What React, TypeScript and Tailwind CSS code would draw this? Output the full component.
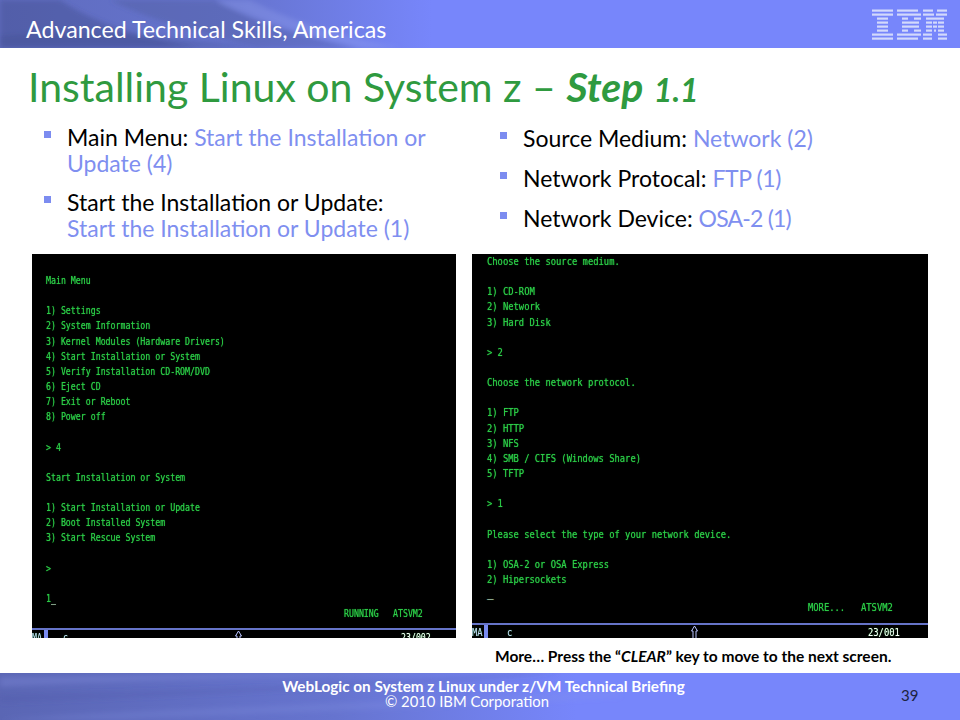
const leftLines = `Main Menu

1) Settings
2) System Information
3) Kernel Modules (Hardware Drivers)
4) Start Installation or System
5) Verify Installation CD-ROM/DVD
6) Eject CD
7) Exit or Reboot
8) Power off

> 4

Start Installation or System

1) Start Installation or Update
2) Boot Installed System
3) Start Rescue System

>

1`;

const rightLines = `Choose the source medium.

1) CD-ROM
2) Network
3) Hard Disk

> 2

Choose the network protocol.

1) FTP
2) HTTP
3) NFS
4) SMB / CIFS (Windows Share)
5) TFTP

> 1

Please select the type of your network device.

1) OSA-2 or OSA Express
2) Hipersockets`;

// each stripe: [x, width] pieces of the logo, drawn on a 75x31 box
const logoStripes: [number, number][][] = [
  [[0, 21], [25, 21], [51, 10], [65, 10]],
  [[0, 21], [25, 24], [51, 11], [64, 11]],
  [[5, 11], [30, 6], [42, 7], [54, 18]],
  [[5, 11], [30, 17], [54, 6], [61, 4], [66, 6]],
  [[5, 11], [30, 17], [54, 6], [61, 4], [66, 6]],
  [[5, 11], [30, 6], [42, 7], [54, 6], [62, 2], [66, 6]],
  [[0, 21], [25, 24], [51, 9], [66, 9]],
  [[0, 21], [25, 21], [51, 9], [66, 9]],
];

function IbmLogo() {
  return (
    <svg width="75" height="31" viewBox="0 0 75 31" className="absolute right-[13px] top-[9px]" fill="#d3d9fb">
      {logoStripes.map((pieces, i) =>
        pieces.map(([x, w]) => <rect key={`${i}-${x}`} x={x} y={i * 4 + 0.5} width={w} height="2.2" />)
      )}
    </svg>
  );
}

function Swoosh({ height, id, flip }: { height: number; id: string; flip?: boolean }) {
  return (
    <svg className="absolute inset-0" width="960" height={height} viewBox={`0 0 960 ${height}`}>
      <defs>
        <filter id={id}>
          <feGaussianBlur stdDeviation="2.5" />
        </filter>
      </defs>
      {flip ? (
        <g filter={`url(#${id})`}>
          <path d="M0 14 C150 6 300 4 480 0 L300 0 L0 4 Z" fill="#8791e0" opacity="0.3" />
          <path d="M0 30 C200 22 380 14 560 0 L520 0 C340 14 160 18 0 22 Z" fill="#4a57a8" opacity="0.25" />
          <path d="M0 47 C120 36 340 32 620 18 L620 24 C380 38 200 42 120 47 Z" fill="#8a95e8" opacity="0.2" />
        </g>
      ) : (
        <g filter={`url(#${id})`}>
          <path d="M0 0 L60 0 C90 20 130 36 200 48 L0 48 Z" fill="#3f4b8a" opacity="0.4" />
          <path d="M110 0 L215 0 C250 20 300 36 360 48 L260 48 C200 34 150 20 110 0 Z" fill="#46528f" opacity="0.3" />
          <path d="M215 0 L250 0 C285 18 330 34 400 48 L360 48 C300 34 250 18 215 0 Z" fill="#98a4f0" opacity="0.3" />
          <path d="M0 36 C60 30 150 32 260 48 L0 48 Z" fill="#3f4b8a" opacity="0.3" />
        </g>
      )}
    </svg>
  );
}

function Bullet({ children, className }: { children: React.ReactNode; className?: string }) {
  return (
    <li className={`flex ${className ?? ""}`}>
      <span className="mt-[7px] h-[7px] w-[7px] shrink-0 bg-[#7c8cf0]" />
      <div className="ml-4">{children}</div>
    </li>
  );
}

function Blue({ children, className }: { children: React.ReactNode; className?: string }) {
  return <span className={`text-[#7f8ff0] ${className ?? ""}`}>{children}</span>;
}

function ShiftArrow() {
  return (
    <svg width="7" height="15" viewBox="0 0 7 15" fill="none" stroke="#b9c3ff" strokeWidth="1">
      <path d="M2 15 V6 H0.5 L3.5 1 L6.5 6 H5 V15" />
    </svg>
  );
}

export default function App() {
  return (
    <div className="flex h-[720px] w-[960px] flex-col overflow-hidden bg-white font-['Lato','Open_Sans',sans-serif] text-black">
      <header className="relative h-12 shrink-0 bg-[linear-gradient(90deg,#5f6cbe_0%,#6674cf_25%,#7786fb_45%,#7786fb_100%)]">
        <Swoosh height={48} id="head-blur" />
        <div className="relative pl-[26px] pt-[12px] text-[23.2px] leading-[34px] text-white">Advanced Technical Skills, Americas</div>
        <IbmLogo />
      </header>

      <h1 className="ml-[28px] mt-[14px] h-[50px] text-[41px] leading-[50px] font-normal whitespace-nowrap text-[#2f9a3f]">
        Installing Linux on System z – <span className="font-bold italic">Step</span>{" "}
        <span className="text-[32px] font-bold italic">1.1</span>
      </h1>

      <div className="flex h-[142px] shrink-0 text-[23px] leading-[26px]">
        <ul className="ml-[44px] mt-[12px] w-[411px]">
          <Bullet>
            Main Menu: <Blue>Start the Installation or Update (4)</Blue>
          </Bullet>
          <Bullet className="mt-[13px]">
            Start the Installation or Update:
            <br />
            <Blue>Start the Installation or Update (1)</Blue>
          </Bullet>
        </ul>
        <ul className="ml-[45px] mt-[13px] flex flex-col gap-[14px]">
          <Bullet>
            Source Medium: <Blue>Network (2)</Blue>
          </Bullet>
          <Bullet>
            Network Protocal: <Blue className="tracking-[-0.4px]">FTP (1)</Blue>
          </Bullet>
          <Bullet>
            Network Device: <Blue className="tracking-[-0.8px]">OSA-2 (1)</Blue>
          </Bullet>
        </ul>
      </div>

      <div className="flex h-[384px] shrink-0 gap-4 px-8 font-['DejaVu_Sans_Mono',monospace] text-[11px] leading-[15.14px] text-[#2ccb47] [text-shadow:0_0_1px_#22b83c]">
        <section className="flex w-[424px] flex-col overflow-hidden bg-black">
          <pre className="ml-[14px] origin-left scale-x-[0.75] pt-[19px] font-['DejaVu_Sans_Mono',monospace]">
            {leftLines}
            <span className="text-white">_</span>
          </pre>
          <div className="ml-[312px] flex h-[15px]">
            <span className="block w-[49px] origin-left scale-x-[0.75]">RUNNING</span>
            <span className="block origin-left scale-x-[0.75]">ATSVM2</span>
          </div>
          <div className="mt-[7px] flex h-[30px] items-start border-t-2 border-[#6674c8] text-[#c9d0ff]">
            <span className="flex w-[16px]">
              <span className="block w-[12px] origin-left scale-x-[0.75]">MA</span>
              <span className="h-[15px] w-[4px] bg-[#7a8cf0]" />
            </span>
            <span className="ml-[15px] block w-[172px] origin-left scale-x-[0.75]">c</span>
            <span className="block w-[166px]">
              <ShiftArrow />
            </span>
            <span className="block origin-left scale-x-[0.75] text-white">23/002</span>
          </div>
        </section>
        <section className="flex w-[456px] flex-col overflow-hidden bg-black">
          <pre className="ml-[15px] origin-left scale-x-[0.802] font-['DejaVu_Sans_Mono',monospace]">{rightLines}</pre>
          <div className="ml-[15px] h-[13px] leading-[13px] text-white">_</div>
          <div className="ml-[336px] flex h-[15px]">
            <span className="block w-[53px] origin-left scale-x-[0.802]">MORE...</span>
            <span className="block origin-left scale-x-[0.802]">ATSVM2</span>
          </div>
          <div className="mt-[8px] flex h-[15px] items-start border-t-2 border-[#6674c8] text-[#c9d0ff]">
            <span className="flex w-[16px]">
              <span className="block w-[12px] origin-left scale-x-[0.802]">MA</span>
              <span className="h-[15px] w-[4px] bg-[#7a8cf0]" />
            </span>
            <span className="ml-[19px] block w-[184px] origin-left scale-x-[0.802]">c</span>
            <span className="block w-[177px]">
              <ShiftArrow />
            </span>
            <span className="block origin-left scale-x-[0.802] text-white">23/001</span>
          </div>
        </section>
      </div>

      <p className="ml-[495px] mt-[9px] h-[26px] text-[15.5px] leading-[18px] font-bold whitespace-nowrap">
        More… Press the “<span className="italic">CLEAR</span>” key to move to the next screen.
      </p>

      <footer className="relative flex h-[47px] shrink-0 bg-[linear-gradient(90deg,#5a66b4_0%,#6674cf_35%,#7786fb_60%,#7786fb_100%)]">
        <Swoosh height={47} id="foot-blur" flip />
        <div className="relative ml-[282px] w-[403px] pt-[6px] text-[15.3px] leading-[15px] text-white">
          <div className="text-center font-bold whitespace-nowrap">WebLogic on System z Linux under z/VM Technical Briefing</div>
          <div className="ml-[103px] text-[14.8px] whitespace-nowrap">© 2010 IBM Corporation</div>
        </div>
        <span className="relative ml-[216px] pt-[13px] text-[15px] leading-[18px] text-[#1c2340]">39</span>
      </footer>
    </div>
  );
}
